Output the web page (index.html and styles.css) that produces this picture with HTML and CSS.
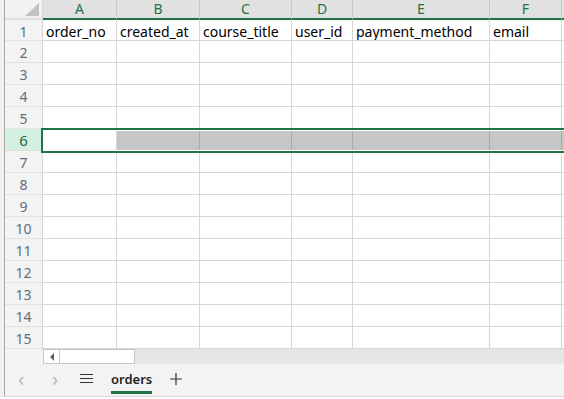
FILE: index.html
```html
<!DOCTYPE html>
<html>
<head>
<meta charset="utf-8">
<link rel="stylesheet" href="styles.css">
</head>
<body>
<div class="app">
  <div class="sheet-wrap">
    <div class="sheet">
      <div class="corner"><span class="tri"></span></div>
      <div class="colh">A</div><div class="colh">B</div><div class="colh">C</div><div class="colh">D</div><div class="colh">E</div><div class="colh">F</div><div class="colh rest"></div>

      <div class="rowh">1</div><div class="cell">order_no</div><div class="cell">created_at</div><div class="cell">course_title</div><div class="cell">user_id</div><div class="cell">payment_method</div><div class="cell">email</div><div class="cell rest"></div>
      <div class="rowh">2</div><div class="cell"></div><div class="cell"></div><div class="cell"></div><div class="cell"></div><div class="cell"></div><div class="cell"></div><div class="cell rest"></div>
      <div class="rowh">3</div><div class="cell"></div><div class="cell"></div><div class="cell"></div><div class="cell"></div><div class="cell"></div><div class="cell"></div><div class="cell rest"></div>
      <div class="rowh">4</div><div class="cell"></div><div class="cell"></div><div class="cell"></div><div class="cell"></div><div class="cell"></div><div class="cell"></div><div class="cell rest"></div>
      <div class="rowh">5</div><div class="cell"></div><div class="cell"></div><div class="cell"></div><div class="cell"></div><div class="cell"></div><div class="cell"></div><div class="cell rest"></div>
      <div class="rowh sel">6</div><div class="cell"></div><div class="cell grey"></div><div class="cell grey"></div><div class="cell grey"></div><div class="cell grey"></div><div class="cell grey"></div><div class="cell grey rest"></div>
      <div class="rowh">7</div><div class="cell"></div><div class="cell"></div><div class="cell"></div><div class="cell"></div><div class="cell"></div><div class="cell"></div><div class="cell rest"></div>
      <div class="rowh">8</div><div class="cell"></div><div class="cell"></div><div class="cell"></div><div class="cell"></div><div class="cell"></div><div class="cell"></div><div class="cell rest"></div>
      <div class="rowh">9</div><div class="cell"></div><div class="cell"></div><div class="cell"></div><div class="cell"></div><div class="cell"></div><div class="cell"></div><div class="cell rest"></div>
      <div class="rowh">10</div><div class="cell"></div><div class="cell"></div><div class="cell"></div><div class="cell"></div><div class="cell"></div><div class="cell"></div><div class="cell rest"></div>
      <div class="rowh">11</div><div class="cell"></div><div class="cell"></div><div class="cell"></div><div class="cell"></div><div class="cell"></div><div class="cell"></div><div class="cell rest"></div>
      <div class="rowh">12</div><div class="cell"></div><div class="cell"></div><div class="cell"></div><div class="cell"></div><div class="cell"></div><div class="cell"></div><div class="cell rest"></div>
      <div class="rowh">13</div><div class="cell"></div><div class="cell"></div><div class="cell"></div><div class="cell"></div><div class="cell"></div><div class="cell"></div><div class="cell rest"></div>
      <div class="rowh">14</div><div class="cell"></div><div class="cell"></div><div class="cell"></div><div class="cell"></div><div class="cell"></div><div class="cell"></div><div class="cell rest"></div>
      <div class="rowh">15</div><div class="cell"></div><div class="cell"></div><div class="cell"></div><div class="cell"></div><div class="cell"></div><div class="cell"></div><div class="cell rest"></div>
    </div>
    <div class="selection"></div>
  </div>
  <div class="hscroll">
    <div class="hs-spacer"></div>
    <div class="hs-btn"><span class="hs-arrow"></span></div>
    <div class="hs-thumb"></div>
    <div class="hs-track"></div>
  </div>
  <div class="tabs">
    <span class="nav">&lsaquo;</span>
    <span class="nav">&rsaquo;</span>
    <svg class="menu" width="13" height="11" viewBox="0 0 13 11"><path d="M0 1.5H13M0 5.5H13M0 9.5H13" stroke="#333" stroke-width="1.2" fill="none"/></svg>
    <span class="tab">orders</span>
    <svg class="plus" width="12" height="12" viewBox="0 0 12 12"><path d="M6 0V12M0 6H12" stroke="#333" stroke-width="1.2" fill="none"/></svg>
  </div>
</div>
</body>
</html>
```

FILE: styles.css
```css
html, body {
  margin: 0;
  padding: 0;
  background: #ffffff;
  overflow: hidden;
}
.app {
  width: 564px;
  height: 396px;
  border-left: 1px solid #a8a8a8;
  margin-left: 4px;
  box-shadow: -4px 0 0 #f0f0f0;
  font-family: "Noto Sans", "Open Sans", sans-serif;
  font-size: 14px;
  display: flex;
  flex-direction: column;
  overflow: hidden;
  border-bottom: 1px solid #d6d6d6;
  background: #f3f3f3;
}
.sheet-wrap {
  position: relative;
  background: #fff;
}
.sheet {
  display: grid;
  grid-template-columns: 38px 74px 83px 92px 61px 137px 72px 40px;
  grid-template-rows: 20px 21px repeat(14, 22px);
}
.sheet > div {
  box-sizing: border-box;
}
.corner {
  background: #f2f2f2;
  border-right: 1px solid #d4d4d4;
  border-bottom: 2px solid #e0e0e0;
  position: relative;
}
.tri {
  position: absolute;
  right: 3px;
  bottom: 2px;
  width: 0;
  height: 0;
  border-left: 14px solid transparent;
  border-bottom: 13px solid #c2c2c2;
}
.colh {
  background: #e1e1e1;
  border-right: 1px solid #c8c8c8;
  border-bottom: 2px solid #217346;
  color: #217346;
  text-align: center;
  line-height: 18px;
  font-size: 14px;
}
.colh.rest { border-right: none; }
.rowh {
  background: #f3f3f3;
  border-right: 1px solid #d4d4d4;
  border-bottom: 1px solid #e1e1e1;
  color: #5f6f7f;
  text-align: center;
  line-height: 21px;
  padding-top: 1px;
  font-size: 14px;
}
.rowh.sel {
  background: #d3f0e0;
  color: #1e6b44;
  font-size: 15px;
}
.cell {
  border-right: 1px solid #d6d6d6;
  border-bottom: 1px solid #d6d6d6;
  padding-left: 3px;
  padding-top: 1px;
  line-height: 21px;
  color: #000;
  white-space: nowrap;
  overflow: hidden;
}
.cell.grey {
  background: #c6c6c6;
  border-right-color: #a9a9a9;
}
.cell.rest { border-right: none; }
.selection {
  position: absolute;
  left: 36px;
  top: 128px;
  width: 540px;
  height: 25px;
  box-sizing: border-box;
  border: 2px solid #217346;
  box-shadow: inset 0 0 0 1px #ffffff;
}
.hscroll {
  display: flex;
  height: 15px;
  box-sizing: border-box;
  background: #f3f3f3;
}
.hs-spacer { width: 38px; }
.hs-btn {
  width: 17px;
  box-sizing: border-box;
  border: 1px solid #c6c6c6;
  background: #fff;
  display: flex;
  align-items: center;
  justify-content: center;
}
.hs-arrow {
  width: 0;
  height: 0;
  border-top: 4px solid transparent;
  border-bottom: 4px solid transparent;
  border-right: 4px solid #606060;
}
.hs-thumb {
  width: 75px;
  box-sizing: border-box;
  border: 1px solid #c6c6c6;
  border-left: none;
  background: #fff;
}
.hs-track {
  flex: 1;
  background: #e6e6e6;
}
.tabs {
  flex: 1;
  display: flex;
  align-items: center;
  background: #f3f3f3;
  padding-bottom: 3px;
}
.nav {
  color: #b8b8b8;
  font-size: 20px;
  line-height: 20px;
  width: 10px;
}
.nav:first-child { margin-left: 13px; }
.nav + .nav { margin-left: 24px; }
.menu { margin-left: 18px; }
.tab {
  margin-left: 18px;
  font-size: 13px;
  line-height: 18px;
  color: #222;
  font-weight: 600;
  position: relative;
}
.tab::after {
  content: "";
  position: absolute;
  left: 0;
  right: 0;
  bottom: -6px;
  height: 3px;
  background: #217346;
}
.plus { margin-left: 18px; }
```
